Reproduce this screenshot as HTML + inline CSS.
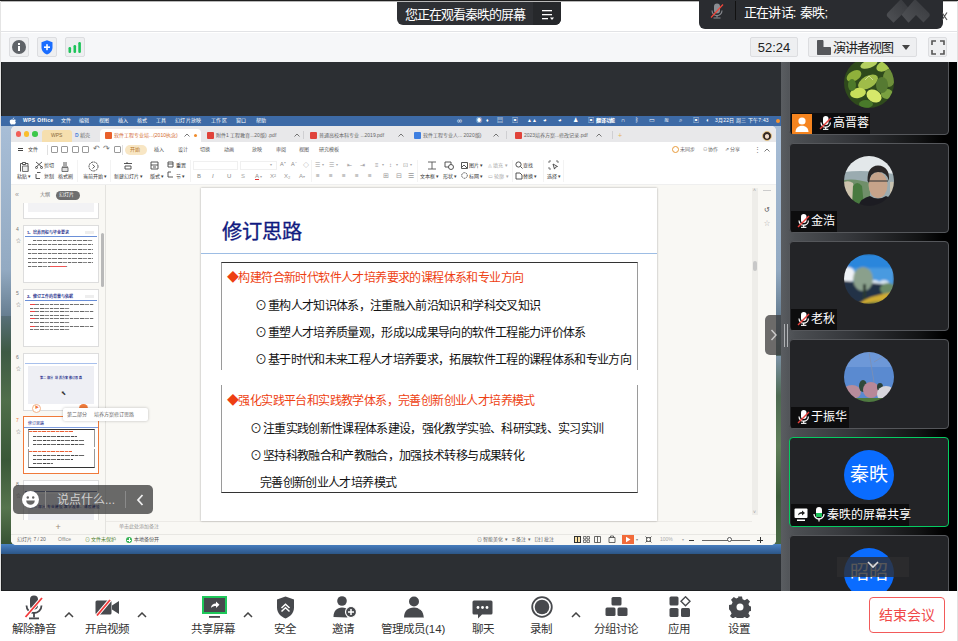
<!DOCTYPE html>
<html lang="zh-CN"><head><meta charset="utf-8">
<style>
*{margin:0;padding:0;box-sizing:border-box}
html,body{width:958px;height:641px;overflow:hidden;background:#fff;font-family:"Liberation Sans",sans-serif;position:relative}
.a{position:absolute}
#topline{left:0;top:0;width:958px;height:2px;background:linear-gradient(#1e1e1e 50%,#b8b8b8 50%)}
#hdr{left:0;top:2px;width:958px;height:30px;background:#fff;border-bottom:1px solid #e2e3e6}
#tb{left:0;top:33px;width:958px;height:29px;background:#f6f7f9}
.ib{top:37px;width:20px;height:20px;border:1px solid #dcdde0;background:#eeeff1;border-radius:2px}
#main{left:1px;top:62px;width:780px;height:529px;background:#2c2f33;border-left:1px solid #1e2022;border-bottom:1px solid #1e2022}
#lstrip{left:0;top:1px;width:1px;height:640px;background:#e4e4e4}
#rp{left:781px;top:62px;width:177px;height:529px;background:linear-gradient(90deg,#5a5d61 0%,#4c4f53 8%,#34363a 40%,#121314 78%,#000 92%)}
#bot{left:0;top:591px;width:958px;height:50px;background:#fff}
.card{left:789px;width:160px;height:90px;border:1px solid #5a5c60;border-radius:4px;background:#232427;overflow:hidden}
.lbl{position:absolute;left:1px;bottom:0;height:21px;background:#0d0d0e;color:#fff;font-size:12px;line-height:21px;white-space:nowrap}
.bt{position:absolute;top:595px;text-align:center;color:#333;font-size:12.5px}
.bt span{position:absolute;top:27px;white-space:nowrap}
.av{width:50px;height:50px;border-radius:50%}
#rpc{left:0;top:62px;width:958px;height:529px;overflow:hidden}
#rpc .card{margin-top:-62px}
.t{white-space:nowrap;line-height:1}
</style></head><body>
<div class="a" id="topline"></div>
<div class="a" id="hdr"></div>
<div class="a" id="tb"></div>
<div class="a ib" style="left:9px"><svg class="a" style="left:2px;top:2px" width="14" height="14" viewBox="0 0 14 14"><circle cx="7" cy="7" r="7" fill="#5f6368"/><rect x="6" y="6" width="2" height="5" fill="#fff"/><rect x="6" y="3" width="2" height="2" fill="#fff"/></svg></div>
<div class="a ib" style="left:37px"><svg class="a" style="left:3px;top:2px" width="12" height="15" viewBox="0 0 12 15"><path d="M6 0.3L11.5 2.3V7.5c0 3.4-2.5 5.8-5.5 7-3-1.2-5.5-3.6-5.5-7V2.3z" fill="#1a6dff"/><rect x="5.2" y="4.2" width="1.6" height="6" fill="#fff"/><rect x="3" y="6.4" width="6" height="1.6" fill="#fff"/></svg></div>
<div class="a ib" style="left:65px"><svg class="a" style="left:2px;top:4px" width="14" height="11" viewBox="0 0 14 11"><rect x="0.5" y="5" width="2.6" height="6" rx="1.2" fill="#1dc45a"/><rect x="5.5" y="3" width="2.6" height="8" rx="1.2" fill="#1dc45a"/><rect x="10.3" y="0" width="2.6" height="11" rx="1.2" fill="#1dc45a"/></svg></div>
<div class="a" style="left:750px;top:37px;width:48px;height:20px;border:1px solid #dcdde0;background:#eeeff1;border-radius:2px;color:#222;font-size:13px;line-height:20px;text-align:center">52:24</div>
<div class="a" style="left:808px;top:37px;width:109px;height:20px;border:1px solid #dcdde0;background:#eeeff1;border-radius:2px">
 <svg class="a" style="left:8px;top:2px" width="14" height="15" viewBox="0 0 14 15"><path d="M0.5 0.5h5.5v7h7.5v7h-13z" fill="#55575b" stroke="#55575b" stroke-linejoin="round"/></svg>
 <span class="a" style="left:24px;top:2px;color:#222;font-size:13px;letter-spacing:-1px;line-height:16px;white-space:nowrap">演讲者视图</span>
 <svg class="a" style="left:93px;top:7px" width="8" height="5" viewBox="0 0 8 5"><path d="M0 0h8l-4 5z" fill="#444"/></svg>
</div>
<div class="a" style="left:928px;top:37px;width:19px;height:20px;border:1px solid #dcdde0;background:#eeeff1;border-radius:2px">
 <svg class="a" style="left:2px;top:2px" width="14" height="15" viewBox="0 0 14 15"><path d="M1 5V1h4M9 1h4v4M13 10v4H9M5 14H1v-4" stroke="#555" stroke-width="1.6" fill="none"/></svg>
</div>

<div class="a" id="main"></div><div class="a" id="lstrip"></div><div class="a" style="left:0;top:640px;width:958px;height:1px;background:#e4e4e4"></div>
<div class="a" id="rp"></div>

<div class="a" id="ss" style="left:1px;top:116px;width:780px;height:438px;overflow:hidden;background:linear-gradient(180deg,#a9bfd8 0%,#93aac2 35%,#5d7486 48%,#3f5846 60%,#3c5a3c 80%,#2f4a2e 100%)">
 <div class="a" style="left:0;top:200px;width:12px;height:240px;background:linear-gradient(180deg,#586f78 0%,#3e5a44 15%,#4f6e4a 35%,#3a5838 60%,#56744e 80%,#2e482c 100%)"></div>
 <div class="a" style="left:773px;top:240px;width:8px;height:200px;background:linear-gradient(180deg,#7d93a6 0%,#4e6a52 20%,#5f7e58 45%,#3d5c3a 70%,#4b6a46 100%)"></div>
 <div class="a" style="left:0;top:428px;width:780px;height:10px;background:linear-gradient(180deg,#4b82c2 0%,#3a6aa6 50%,#2c5686 100%)"></div>
 <div class="a" id="menubar" style="left:0;top:0;width:780px;height:10px;background:#3d6aa6"><svg class="a" style="left:8px;top:0.5px" width="7" height="8" viewBox="0 0 7 8"><path d="M3.5 2.2C4 1 5 .5 5.3.5 5.3 1.3 4.5 2 3.5 2.2zM1 3.2c.8-1 2-.9 2.5-.6.5.2 1 .3 1.6-.1.7-.3 1.5 0 1.8.6-.8.5-.9 1.9 0 2.4-.3.9-.9 2-1.7 2-.5 0-.6-.3-1.3-.3s-.9.3-1.4.3C1.6 7.5.2 5 1 3.2z" fill="#fff"/></svg><span class="a t" style="left:22px;top:2px;font-size:5px;letter-spacing:0.35px;color:#fff;font-weight:normal"><b>WPS Office</b></span><span class="a t" style="left:60px;top:2px;font-size:5px;letter-spacing:0.35px;color:#fff;font-weight:normal">文件</span><span class="a t" style="left:78px;top:2px;font-size:5px;letter-spacing:0.35px;color:#fff;font-weight:normal">编辑</span><span class="a t" style="left:98px;top:2px;font-size:5px;letter-spacing:0.35px;color:#fff;font-weight:normal">视图</span><span class="a t" style="left:117px;top:2px;font-size:5px;letter-spacing:0.35px;color:#fff;font-weight:normal">插入</span><span class="a t" style="left:136px;top:2px;font-size:5px;letter-spacing:0.35px;color:#fff;font-weight:normal">格式</span><span class="a t" style="left:155px;top:2px;font-size:5px;letter-spacing:0.35px;color:#fff;font-weight:normal">工具</span><span class="a t" style="left:174px;top:2px;font-size:5px;letter-spacing:0.35px;color:#fff;font-weight:normal">幻灯片放映</span><span class="a t" style="left:210px;top:2px;font-size:5px;letter-spacing:0.35px;color:#fff;font-weight:normal">工作区</span><span class="a t" style="left:235px;top:2px;font-size:5px;letter-spacing:0.35px;color:#fff;font-weight:normal">窗口</span><span class="a t" style="left:255px;top:2px;font-size:5px;letter-spacing:0.35px;color:#fff;font-weight:normal">帮助</span><span class="a t" style="left:456px;top:0.8px;font-size:7px;color:#fff">∞</span><span class="a t" style="left:475px;top:1.4px;font-size:6px;color:#fff">◉</span><span class="a t" style="left:485px;top:2.0px;font-size:5px;color:#fff">♦</span><span class="a t" style="left:496px;top:1.4px;font-size:6px;color:#fff">▤</span><span class="a t" style="left:511px;top:1.4px;font-size:6px;color:#fff">▣</span><span class="a t" style="left:526px;top:2.0px;font-size:5px;color:#fff">▲▲</span><span class="a t" style="left:542px;top:1.4px;font-size:6px;color:#fff">◕</span><span class="a t" style="left:557px;top:1.4px;font-size:6px;color:#fff">◕</span><span class="a t" style="left:572px;top:1.4px;font-size:6px;color:#fff">♟</span><span class="a t" style="left:587px;top:1.4px;font-size:6px;color:#fff">▣</span><span class="a t" style="left:634px;top:1.4px;font-size:6px;color:#fff">ᛒ</span><span class="a t" style="left:648px;top:1.4px;font-size:6px;color:#fff">▭</span><span class="a t" style="left:663px;top:1.4px;font-size:6px;color:#fff">≋</span><span class="a t" style="left:678px;top:1.4px;font-size:6px;color:#fff">⌕</span><span class="a t" style="left:692px;top:1.4px;font-size:6px;color:#fff">▣</span><span class="a t" style="left:705px;top:1.4px;font-size:6px;color:#fff">◐</span><span class="a t" style="left:620px;top:1.4px;font-size:6px;color:#fff">∩</span><span class="a t" style="left:595px;top:2px;font-size:5px;color:#fff;font-weight:bold;letter-spacing:-0.2px">翻译功能</span><span class="a t" style="left:714px;top:2px;font-size:5px;color:#fff;letter-spacing:0.2px">3月22日 周三 下午7:43</span><div class="a" style="left:775px;top:3px;width:4px;height:4px;border-radius:50%;background:#f6922e"></div></div>
 <div class="a" id="wps" style="left:10px;top:10px;width:765px;height:419px;background:#fff;border-radius:5px;overflow:hidden"><!--WPS--><div class="a" style="left:0px;top:0px;width:765px;height:16px;background:#e8e8ea"></div><div class="a" style="left:4.7px;top:5.2px;width:5.6px;height:5.6px;border-radius:50%;background:#f25f58"></div><div class="a" style="left:12.7px;top:5.2px;width:5.6px;height:5.6px;border-radius:50%;background:#f9be2e"></div><div class="a" style="left:21.2px;top:5.2px;width:5.6px;height:5.6px;border-radius:50%;background:#3cc84a"></div><div class="a" style="left:31px;top:4px;width:30px;height:12px;background:#f6dfae;border-radius:3px 3px 0 0"></div><span class="a t" style="left:40px;top:7.0px;font-size:5px;color:#8a6a3a;font-weight:normal;">WPS</span><span class="a t" style="left:64px;top:7.0px;font-size:5px;color:#666;font-weight:normal;"><b style="color:#4a7fd8">D</b> 稻壳</span><div class="a" style="left:89px;top:3px;width:101px;height:13px;background:#fff;border-radius:4px 4px 0 0"></div><div class="a" style="left:94px;top:6px;width:7px;height:7px;background:#e9612c;border-radius:1px"></div><span class="a t" style="left:103px;top:7.0px;font-size:5px;color:#d2692e;font-weight:normal;">软件工程专业培...(2010执念)</span><svg class="a" style="left:173px;top:7px" width="6" height="4" viewBox="0 0 6 4"><path d="M.5 3.5L3 1l2.5 2.5" stroke="#555" stroke-width=".8" fill="none"/></svg><div class="a" style="left:183px;top:8px;width:3px;height:3px;background:#f08c2c;border-radius:50%"></div><div class="a" style="left:196px;top:6px;width:7px;height:7px;background:#e0433a;border-radius:1px"></div><span class="a t" style="left:205px;top:7.0px;font-size:5px;color:#666;font-weight:normal;">附件1 工程教育...20版) .pdf</span><div class="a" style="left:292px;top:5px;width:1px;height:8px;background:#cfcfd2"></div><div class="a" style="left:299px;top:6px;width:7px;height:7px;background:#e0433a;border-radius:1px"></div><span class="a t" style="left:308px;top:7.0px;font-size:5px;color:#666;font-weight:normal;">普通高校本科专业 ...2019.pdf</span><div class="a" style="left:403px;top:6px;width:7px;height:7px;background:#3f7fe0;border-radius:1px"></div><span class="a t" style="left:412px;top:7.0px;font-size:5px;color:#666;font-weight:normal;">软件工程专业人... 2020版)</span><svg class="a" style="left:482px;top:7px" width="6" height="4" viewBox="0 0 6 4"><path d="M.5 3.5L3 1l2.5 2.5" stroke="#555" stroke-width=".8" fill="none"/></svg><div class="a" style="left:495px;top:5px;width:1px;height:8px;background:#cfcfd2"></div><div class="a" style="left:504px;top:6px;width:7px;height:7px;background:#e0433a;border-radius:1px"></div><span class="a t" style="left:513px;top:7.0px;font-size:5px;color:#666;font-weight:normal;">2023培养方案...修改记录.pdf</span><div class="a" style="left:601px;top:5px;width:1px;height:8px;background:#cfcfd2"></div><svg class="a" style="left:283px;top:7px" width="6" height="4" viewBox="0 0 6 4"><path d="M.5 3.5L3 1l2.5 2.5" stroke="#555" stroke-width=".8" fill="none"/></svg><svg class="a" style="left:387px;top:7px" width="6" height="4" viewBox="0 0 6 4"><path d="M.5 3.5L3 1l2.5 2.5" stroke="#555" stroke-width=".8" fill="none"/></svg><svg class="a" style="left:585px;top:7px" width="6" height="4" viewBox="0 0 6 4"><path d="M.5 3.5L3 1l2.5 2.5" stroke="#555" stroke-width=".8" fill="none"/></svg><span class="a t" style="left:607px;top:5.8px;font-size:7px;color:#e6b455;font-weight:normal;">+</span><div class="a" style="left:751px;top:4.5px;width:10px;height:10px;border-radius:50%;border:1px solid #d9b77a;background:radial-gradient(ellipse at 50% 55%,#f4e6da 0%,#e8d2c0 30%,#2e2522 45%,#3a302c 70%,#f2ece4 85%)"></div><div class="a" style="left:0px;top:16px;width:765px;height:15px;background:#fff"></div><div class="a" style="left:7px;top:21.5px;width:5px;height:1px;background:#444"></div><div class="a" style="left:7px;top:24px;width:5px;height:1px;background:#444"></div><span class="a t" style="left:17px;top:21.0px;font-size:5px;color:#444;font-weight:normal;">文件</span><div class="a" style="left:36px;top:19px;width:1px;height:10px;background:#e0e0e0"></div><div class="a" style="left:40px;top:20px;width:7px;height:7px;border:0.8px solid #999;border-radius:1px;background:#fff"></div><div class="a" style="left:50px;top:20px;width:7px;height:7px;border:0.8px solid #999;border-radius:1px;background:#fff"></div><div class="a" style="left:61px;top:20px;width:7px;height:7px;border:0.8px solid #999;border-radius:1px;background:#fff"></div><div class="a" style="left:71px;top:20px;width:7px;height:7px;border:0.8px solid #999;border-radius:1px;background:#fff"></div><span class="a t" style="left:82px;top:19.2px;font-size:8px;color:#777;font-weight:normal;">↶</span><span class="a t" style="left:92px;top:19.2px;font-size:8px;color:#777;font-weight:normal;">↷</span><div class="a" style="left:103px;top:20px;width:7px;height:7px;border:0.8px solid #999;border-radius:1px;background:#fff"></div><div class="a" style="left:111px;top:19px;width:1px;height:10px;background:#e0e0e0"></div><div class="a" style="left:114px;top:19px;width:22px;height:10px;background:#f8e6c4;border-radius:5px"></div><span class="a t" style="left:119px;top:21.0px;font-size:5px;color:#b7782c;font-weight:normal;">开始</span><span class="a t" style="left:143px;top:21.0px;font-size:5px;color:#555;font-weight:normal;">插入</span><span class="a t" style="left:167px;top:21.0px;font-size:5px;color:#555;font-weight:normal;">设计</span><span class="a t" style="left:189px;top:21.0px;font-size:5px;color:#555;font-weight:normal;">切换</span><span class="a t" style="left:213px;top:21.0px;font-size:5px;color:#555;font-weight:normal;">动画</span><span class="a t" style="left:241px;top:21.0px;font-size:5px;color:#555;font-weight:normal;">放映</span><span class="a t" style="left:265px;top:21.0px;font-size:5px;color:#555;font-weight:normal;">审阅</span><span class="a t" style="left:288px;top:21.0px;font-size:5px;color:#555;font-weight:normal;">视图</span><span class="a t" style="left:308px;top:21.0px;font-size:5px;color:#555;font-weight:normal;">研究模板</span><div class="a" style="left:661px;top:20px;width:7px;height:7px;border:1px solid #e89a3a;border-radius:50%"></div><span class="a t" style="left:669px;top:21.0px;font-size:5px;color:#666;font-weight:normal;">未同步</span><span class="a t" style="left:692px;top:21.0px;font-size:5px;color:#666;font-weight:normal;">⚇ 协作</span><span class="a t" style="left:714px;top:21.0px;font-size:5px;color:#666;font-weight:normal;">⇗ 分享</span><span class="a t" style="left:743px;top:19.8px;font-size:7px;color:#777;font-weight:normal;">⋮</span><svg class="a" style="left:753px;top:22px" width="6" height="4" viewBox="0 0 6 4"><path d="M.5 3.5L3 1l2.5 2.5" stroke="#555" stroke-width=".8" fill="none"/></svg><div class="a" style="left:0px;top:31px;width:765px;height:28px;background:#fff"></div><div class="a" style="left:0px;top:58px;width:765px;height:1px;background:#efefef"></div><svg class="a" style="left:8px;top:35px" width="10" height="11" viewBox="0 0 10 11" fill="none" stroke="#444" stroke-width="0.9"><path d="M1.5 10.5V2.5h2M6.5 2.5h2.5v8"/><path d="M3.5 1.5h3v2h-3z"/><path d="M3.5 5h5.5v5.5H3.5z" fill="#eee" stroke="#666"/></svg><span class="a t" style="left:6px;top:48.0px;font-size:5px;color:#3a3a3a;font-weight:normal;">粘贴 ▾</span><svg class="a" style="left:24px;top:35px" width="8" height="8" viewBox="0 0 8 8" fill="none" stroke="#444" stroke-width="0.9"><path d="M1 1l6 5M7 1L1 6"/><circle cx="1.5" cy="6.5" r="1"/><circle cx="6.5" cy="6.5" r="1"/></svg><span class="a t" style="left:33px;top:36.5px;font-size:5px;color:#3a3a3a;font-weight:normal;">剪切</span><svg class="a" style="left:24px;top:45px" width="7" height="8" viewBox="0 0 7 8" fill="none" stroke="#444" stroke-width="0.9"><path d="M2 1.5h3.5M1 3v4.5h4"/></svg><span class="a t" style="left:33px;top:47.5px;font-size:5px;color:#3a3a3a;font-weight:normal;">复制</span><svg class="a" style="left:50px;top:35px" width="8" height="11" viewBox="0 0 8 11" fill="none" stroke="#444" stroke-width="0.9"><path d="M3 1v4M5 1v4M1 6h6" /><path d="M1 6.5h6v4H1z" fill="#ddd" stroke="#666"/></svg><span class="a t" style="left:47px;top:48.0px;font-size:5px;color:#3a3a3a;font-weight:normal;">格式刷</span><div class="a" style="left:66px;top:34px;width:1px;height:22px;background:#f3f3f3"></div><svg class="a" style="left:77px;top:35px" width="11" height="11" viewBox="0 0 11 11" fill="none" stroke="#444" stroke-width="0.9"><circle cx="5.5" cy="5.5" r="4.5" stroke-dasharray="2 0.6"/><path d="M4.5 3.5l2.2 2-2.2 2"/></svg><span class="a t" style="left:72px;top:48.0px;font-size:5px;color:#3a3a3a;font-weight:normal;">当前开始 ▾</span><div class="a" style="left:99px;top:34px;width:1px;height:22px;background:#f3f3f3"></div><svg class="a" style="left:112px;top:35px" width="10" height="10" viewBox="0 0 10 10" fill="none" stroke="#444" stroke-width="0.9"><path d="M1 2.5h8M2 5h6v3H2z M4 1v2"/></svg><span class="a t" style="left:103px;top:48.0px;font-size:5px;color:#3a3a3a;font-weight:normal;">新建幻灯片 ▾</span><svg class="a" style="left:139px;top:35px" width="9" height="9" viewBox="0 0 9 9" fill="none" stroke="#444" stroke-width="0.9"><path d="M1 1h7v7H1z M1 4h7 M3 6h3"/></svg><span class="a t" style="left:139px;top:48.0px;font-size:5px;color:#3a3a3a;font-weight:normal;">版式 ▾</span><svg class="a" style="left:156px;top:35px" width="7" height="7" viewBox="0 0 7 7" fill="none" stroke="#444" stroke-width="0.9"><path d="M1 1h5v5H1z M1 3h5"/></svg><span class="a t" style="left:165px;top:37.0px;font-size:5px;color:#3a3a3a;font-weight:normal;">重置</span><svg class="a" style="left:156px;top:45px" width="7" height="7" viewBox="0 0 7 7" fill="none" stroke="#444" stroke-width="0.9"><path d="M1 1h3M1 1v5h5"/></svg><span class="a t" style="left:165px;top:48.0px;font-size:5px;color:#3a3a3a;font-weight:normal;">节 ▾</span><div class="a" style="left:179px;top:34px;width:1px;height:22px;background:#f3f3f3"></div><div class="a" style="left:182px;top:35px;width:45px;height:9px;border:1px solid #f0f0f0"></div><div class="a" style="left:229px;top:35px;width:37px;height:9px;border:1px solid #f0f0f0"></div><span class="a t" style="left:259px;top:37.1px;font-size:4px;color:#aaa;font-weight:normal;">▾</span><span class="a t" style="left:269px;top:36.2px;font-size:5.5px;color:#888;font-weight:normal;">A⁺</span><span class="a t" style="left:280px;top:36.2px;font-size:5.5px;color:#888;font-weight:normal;">A⁻</span><span class="a t" style="left:292px;top:35.9px;font-size:6px;color:#888;font-weight:normal;">◇</span><span class="a t" style="left:186px;top:47.4px;font-size:6px;color:#888;font-weight:normal;">B</span><span class="a t" style="left:201px;top:47.4px;font-size:6px;color:#888;font-weight:normal;"><i>I</i></span><span class="a t" style="left:216px;top:47.4px;font-size:6px;color:#888;font-weight:normal;">U</span><span class="a t" style="left:230px;top:47.4px;font-size:6px;color:#aaa;font-weight:normal;">S</span><span class="a t" style="left:244px;top:47.4px;font-size:6px;color:#888;font-weight:normal;"><u style="text-decoration-color:#e03030">A</u></span><span class="a t" style="left:259px;top:47.4px;font-size:6px;color:#999;font-weight:normal;">X²</span><span class="a t" style="left:273px;top:47.4px;font-size:6px;color:#999;font-weight:normal;">X₂</span><span class="a t" style="left:288px;top:47.4px;font-size:6px;color:#999;font-weight:normal;">A</span><span class="a t" style="left:249px;top:48.6px;font-size:4px;color:#aaa;font-weight:normal;">▾</span><span class="a t" style="left:292px;top:48.6px;font-size:4px;color:#aaa;font-weight:normal;">▾</span><div class="a" style="left:300px;top:34px;width:1px;height:22px;background:#f3f3f3"></div><span class="a t" style="left:304px;top:35.9px;font-size:6px;color:#999;font-weight:normal;">☰</span><span class="a t" style="left:318px;top:35.9px;font-size:6px;color:#999;font-weight:normal;">☰</span><span class="a t" style="left:336px;top:35.9px;font-size:6px;color:#999;font-weight:normal;">⇤</span><span class="a t" style="left:349px;top:35.9px;font-size:6px;color:#999;font-weight:normal;">⇥</span><span class="a t" style="left:364px;top:35.9px;font-size:6px;color:#999;font-weight:normal;">≡</span><span class="a t" style="left:378px;top:35.9px;font-size:6px;color:#999;font-weight:normal;">↕</span><span class="a t" style="left:392px;top:35.9px;font-size:6px;color:#999;font-weight:normal;">⊡</span><span class="a t" style="left:311px;top:37.1px;font-size:4px;color:#aaa;font-weight:normal;">▾</span><span class="a t" style="left:325px;top:37.1px;font-size:4px;color:#aaa;font-weight:normal;">▾</span><span class="a t" style="left:371px;top:37.1px;font-size:4px;color:#aaa;font-weight:normal;">▾</span><span class="a t" style="left:385px;top:37.1px;font-size:4px;color:#aaa;font-weight:normal;">▾</span><span class="a t" style="left:399px;top:37.1px;font-size:4px;color:#aaa;font-weight:normal;">▾</span><span class="a t" style="left:305px;top:47.1px;font-size:6.5px;color:#999;font-weight:normal;">≡</span><span class="a t" style="left:318px;top:47.1px;font-size:6.5px;color:#999;font-weight:normal;">≡</span><span class="a t" style="left:331px;top:47.1px;font-size:6.5px;color:#999;font-weight:normal;">≡</span><span class="a t" style="left:344px;top:47.1px;font-size:6.5px;color:#999;font-weight:normal;">≡</span><span class="a t" style="left:357px;top:47.1px;font-size:6.5px;color:#999;font-weight:normal;">≡</span><span class="a t" style="left:372px;top:47.1px;font-size:6.5px;color:#999;font-weight:normal;">⊞</span><span class="a t" style="left:385px;top:47.1px;font-size:6.5px;color:#999;font-weight:normal;">⊟</span><span class="a t" style="left:397px;top:47.1px;font-size:6.5px;color:#999;font-weight:normal;">☰</span><div class="a" style="left:406px;top:34px;width:1px;height:22px;background:#f3f3f3"></div><svg class="a" style="left:416px;top:35px" width="10" height="9" viewBox="0 0 10 9" fill="none" stroke="#444" stroke-width="0.9"><path d="M1 1h8M5 1v7M1 8h8" stroke="#555"/></svg><span class="a t" style="left:409px;top:48.0px;font-size:5px;color:#3a3a3a;font-weight:normal;">文本框 ▾</span><svg class="a" style="left:433px;top:35px" width="10" height="9" viewBox="0 0 10 9" fill="none" stroke="#444" stroke-width="0.9"><path d="M1 1h6v5H1z"/><circle cx="7" cy="6" r="2.5" fill="#fff"/></svg><span class="a t" style="left:432px;top:48.0px;font-size:5px;color:#3a3a3a;font-weight:normal;">形状 ▾</span><svg class="a" style="left:450px;top:36px" width="7" height="7" viewBox="0 0 7 7" fill="none" stroke="#444" stroke-width="0.9"><path d="M.5 .5h6v6h-6z M1 5l2-2 3 3"/></svg><span class="a t" style="left:458px;top:37.0px;font-size:5px;color:#3a3a3a;font-weight:normal;">图片 ▾</span><svg class="a" style="left:450px;top:46px" width="7" height="7" viewBox="0 0 7 7" fill="none" stroke="#444" stroke-width="0.9"><circle cx="3.5" cy="3.5" r="2.8" stroke-dasharray="1.2 .6"/></svg><span class="a t" style="left:458px;top:48.0px;font-size:5px;color:#3a3a3a;font-weight:normal;">标网 ▾</span><span class="a t" style="left:477px;top:37.0px;font-size:5px;color:#aaa;font-weight:normal;">◬ 填充 ▾</span><span class="a t" style="left:477px;top:48.0px;font-size:5px;color:#aaa;font-weight:normal;">▭ 轮廓 ▾</span><div class="a" style="left:501px;top:34px;width:1px;height:22px;background:#f3f3f3"></div><svg class="a" style="left:504px;top:35px" width="8" height="8" viewBox="0 0 8 8" fill="none" stroke="#444" stroke-width="0.9"><circle cx="3.5" cy="3.5" r="2.6"/><path d="M5.5 5.5l2 2"/></svg><span class="a t" style="left:512px;top:37.0px;font-size:5px;color:#3a3a3a;font-weight:normal;">查找</span><svg class="a" style="left:504px;top:46px" width="8" height="8" viewBox="0 0 8 8" fill="none" stroke="#444" stroke-width="0.9"><path d="M1 7V1h4l2 2v4z"/></svg><span class="a t" style="left:512px;top:48.0px;font-size:5px;color:#3a3a3a;font-weight:normal;">替换 ▾</span><div class="a" style="left:532px;top:34px;width:1px;height:22px;background:#f3f3f3"></div><svg class="a" style="left:537px;top:34px" width="11" height="11" viewBox="0 0 11 11" fill="none" stroke="#444" stroke-width="0.9"><path d="M1 3V1h2M8 1h2v2M1 7v2h2" stroke="#666"/><path d="M5 4l4.5 2.5-2 .6-1 2z" fill="#fff" stroke="#444"/></svg><span class="a t" style="left:536px;top:48.0px;font-size:5px;color:#3a3a3a;font-weight:normal;">选择 ▾</span><div class="a" style="left:552px;top:34px;width:1px;height:22px;background:#f3f3f3"></div><div class="a" style="left:0px;top:59px;width:765px;height:349px;background:#f9f8f4"></div><div class="a" style="left:94px;top:59px;width:1px;height:349px;background:#e4e3df"></div><span class="a t" style="left:4px;top:64.8px;font-size:7px;color:#999;font-weight:normal;">«</span><span class="a t" style="left:29px;top:66.0px;font-size:5px;color:#777;font-weight:normal;">大纲</span><div class="a" style="left:45px;top:65px;width:24px;height:9px;background:#6e6e6e;border-radius:5px"></div><span class="a t" style="left:48px;top:66.0px;font-size:5px;color:#fff;font-weight:normal;">幻灯片</span><div class="a" style="left:0;top:77px;width:94px;height:317px;overflow:hidden"><div class="a" style="left:12px;top:-42px;width:76px;height:58px;background:#fff;border:1px solid #ddd"></div><span class="a t" style="left:5px;top:-40.0px;font-size:5px;color:#777;">3</span><span class="a t" style="left:5px;top:-29.0px;font-size:5px;color:#888;">☆</span><div class="a" style="left:12px;top:22px;width:76px;height:58px;background:#fff;border:1px solid #ddd"></div><span class="a t" style="left:5px;top:24.0px;font-size:5px;color:#777;">4</span><span class="a t" style="left:5px;top:35.0px;font-size:5px;color:#888;">☆</span><div class="a" style="left:12px;top:86px;width:76px;height:58px;background:#fff;border:1px solid #ddd"></div><span class="a t" style="left:5px;top:88.0px;font-size:5px;color:#777;">5</span><span class="a t" style="left:5px;top:99.0px;font-size:5px;color:#888;">☆</span><div class="a" style="left:12px;top:150px;width:76px;height:58px;background:#fff;border:1px solid #ddd"></div><span class="a t" style="left:5px;top:152.0px;font-size:5px;color:#777;">6</span><span class="a t" style="left:5px;top:163.0px;font-size:5px;color:#888;">☆</span><div class="a" style="left:12px;top:213px;width:76px;height:58px;background:#fff;border:1.5px solid #f07a3a"></div><span class="a t" style="left:5px;top:215.0px;font-size:5px;color:#f07a3a;">7</span><span class="a t" style="left:5px;top:226.0px;font-size:5px;color:#888;">☆</span><div class="a" style="left:12px;top:277px;width:76px;height:58px;background:#fff;border:1px solid #ddd"></div><span class="a t" style="left:5px;top:279.0px;font-size:5px;color:#777;">8</span><span class="a t" style="left:5px;top:290.0px;font-size:5px;color:#888;">☆</span><div class="a" style="left:17px;top:-13px;width:66px;height:22px;background:#f2f2f4"></div><span class="a t" style="left:16px;top:27.6px;font-size:4px;color:#555;"><span style="color:#1b2a8a;font-weight:bold">1、培养目标与毕业要求</span></span><div class="a" style="left:74px;top:28px;width:9px;height:3px;background:#eee"></div><div class="a" style="left:14px;top:33px;width:72px;height:1px;background:#6a8fd8"></div><div class="a" style="left:22px;top:37px;width:60px;height:1px;background:repeating-linear-gradient(90deg,#6a6a6a 0 3px,#d8d8d8 3px 4px,#7a7a7a 4px 9px,#f4f4f4 9px 10px,#666 10px 14px,#c8c8c8 14px 15px,#888 15px 19px,#eee 19px 20px)"></div><div class="a" style="left:17px;top:41px;width:65px;height:1px;background:repeating-linear-gradient(90deg,#6a6a6a 0 3px,#d8d8d8 3px 4px,#7a7a7a 4px 9px,#f4f4f4 9px 10px,#666 10px 14px,#c8c8c8 14px 15px,#888 15px 19px,#eee 19px 20px)"></div><div class="a" style="left:17px;top:46px;width:65px;height:1px;background:repeating-linear-gradient(90deg,#6a6a6a 0 3px,#d8d8d8 3px 4px,#7a7a7a 4px 9px,#f4f4f4 9px 10px,#666 10px 14px,#c8c8c8 14px 15px,#888 15px 19px,#eee 19px 20px)"></div><div class="a" style="left:17px;top:50px;width:65px;height:1px;background:repeating-linear-gradient(90deg,#6a6a6a 0 3px,#d8d8d8 3px 4px,#7a7a7a 4px 9px,#f4f4f4 9px 10px,#666 10px 14px,#c8c8c8 14px 15px,#888 15px 19px,#eee 19px 20px)"></div><div class="a" style="left:17px;top:55px;width:65px;height:1px;background:repeating-linear-gradient(90deg,#6a6a6a 0 3px,#d8d8d8 3px 4px,#7a7a7a 4px 9px,#f4f4f4 9px 10px,#666 10px 14px,#c8c8c8 14px 15px,#888 15px 19px,#eee 19px 20px)"></div><div class="a" style="left:17px;top:59px;width:65px;height:1px;background:repeating-linear-gradient(90deg,#6a6a6a 0 3px,#d8d8d8 3px 4px,#7a7a7a 4px 9px,#f4f4f4 9px 10px,#666 10px 14px,#c8c8c8 14px 15px,#888 15px 19px,#eee 19px 20px)"></div><div class="a" style="left:17px;top:63px;width:40px;height:1px;background:repeating-linear-gradient(90deg,#6a6a6a 0 3px,#d8d8d8 3px 4px,#7a7a7a 4px 9px,#f4f4f4 9px 10px,#666 10px 14px,#c8c8c8 14px 15px,#888 15px 19px,#eee 19px 20px)"></div><div class="a" style="left:39px;top:63px;width:16px;height:1px;background:#e55"></div><span class="a t" style="left:16px;top:91.6px;font-size:4px;color:#555;"><span style="color:#1b2a8a;font-weight:bold">2、修订工作的背景与依据</span></span><div class="a" style="left:74px;top:92px;width:9px;height:3px;background:#eee"></div><div class="a" style="left:14px;top:97px;width:72px;height:1px;background:#6a8fd8"></div><div class="a" style="left:19px;top:101px;width:64px;height:1px;background:repeating-linear-gradient(90deg,#6a6a6a 0 3px,#d8d8d8 3px 4px,#7a7a7a 4px 9px,#f4f4f4 9px 10px,#666 10px 14px,#c8c8c8 14px 15px,#888 15px 19px,#eee 19px 20px)"></div><div class="a" style="left:19px;top:101px;width:5px;height:1px;background:#e44"></div><div class="a" style="left:19px;top:105px;width:40px;height:1px;background:repeating-linear-gradient(90deg,#6a6a6a 0 3px,#d8d8d8 3px 4px,#7a7a7a 4px 9px,#f4f4f4 9px 10px,#666 10px 14px,#c8c8c8 14px 15px,#888 15px 19px,#eee 19px 20px)"></div><div class="a" style="left:19px;top:108px;width:64px;height:1px;background:repeating-linear-gradient(90deg,#6a6a6a 0 3px,#d8d8d8 3px 4px,#7a7a7a 4px 9px,#f4f4f4 9px 10px,#666 10px 14px,#c8c8c8 14px 15px,#888 15px 19px,#eee 19px 20px)"></div><div class="a" style="left:19px;top:108px;width:5px;height:1px;background:#e44"></div><div class="a" style="left:19px;top:112px;width:40px;height:1px;background:repeating-linear-gradient(90deg,#6a6a6a 0 3px,#d8d8d8 3px 4px,#7a7a7a 4px 9px,#f4f4f4 9px 10px,#666 10px 14px,#c8c8c8 14px 15px,#888 15px 19px,#eee 19px 20px)"></div><div class="a" style="left:19px;top:115px;width:64px;height:1px;background:repeating-linear-gradient(90deg,#6a6a6a 0 3px,#d8d8d8 3px 4px,#7a7a7a 4px 9px,#f4f4f4 9px 10px,#666 10px 14px,#c8c8c8 14px 15px,#888 15px 19px,#eee 19px 20px)"></div><div class="a" style="left:19px;top:115px;width:5px;height:1px;background:#e44"></div><div class="a" style="left:19px;top:119px;width:40px;height:1px;background:repeating-linear-gradient(90deg,#6a6a6a 0 3px,#d8d8d8 3px 4px,#7a7a7a 4px 9px,#f4f4f4 9px 10px,#666 10px 14px,#c8c8c8 14px 15px,#888 15px 19px,#eee 19px 20px)"></div><div class="a" style="left:19px;top:123px;width:64px;height:1px;background:repeating-linear-gradient(90deg,#6a6a6a 0 3px,#d8d8d8 3px 4px,#7a7a7a 4px 9px,#f4f4f4 9px 10px,#666 10px 14px,#c8c8c8 14px 15px,#888 15px 19px,#eee 19px 20px)"></div><div class="a" style="left:19px;top:123px;width:5px;height:1px;background:#e44"></div><div class="a" style="left:19px;top:126px;width:40px;height:1px;background:repeating-linear-gradient(90deg,#6a6a6a 0 3px,#d8d8d8 3px 4px,#7a7a7a 4px 9px,#f4f4f4 9px 10px,#666 10px 14px,#c8c8c8 14px 15px,#888 15px 19px,#eee 19px 20px)"></div><div class="a" style="left:14px;top:160px;width:72px;height:1px;background:#a8c0ec"></div><div class="a" style="left:17px;top:163px;width:66px;height:38px;background:#eeeff4"></div><span class="a t" style="left:29px;top:173.7px;font-size:3px;color:#555;"><span style="color:#1b2a8a;font-weight:bold;letter-spacing:.3px">第二部分&nbsp;&nbsp;培养方案修订思路</span></span><span class="a t" style="left:50px;top:187.4px;font-size:6px;color:#333;">⬉</span><div class="a" style="left:21px;top:201px;width:9px;height:9px;border-radius:50%;background:#fff;border:1px solid #f2b48a"></div><span class="a t" style="left:23.5px;top:203.1px;font-size:4px;color:#f0743a;">▶</span><div class="a" style="left:68px;top:201px;width:9px;height:9px;border-radius:50%;background:#f07a3a"></div><span class="a t" style="left:17px;top:218.6px;font-size:4px;color:#555;"><span style="color:#1b2a8a">修订思路</span></span><div class="a" style="left:13px;top:224px;width:74px;height:1px;background:#7f9ee0"></div><div class="a" style="left:17px;top:226px;width:67px;height:18px;border:1px solid #999;border-top-color:#333;border-bottom:none"></div><div class="a" style="left:17px;top:246px;width:67px;height:19px;border:1px solid #999;border-bottom-color:#333;border-top:none"></div><div class="a" style="left:18px;top:228px;width:44px;height:1px;background:repeating-linear-gradient(90deg,#ee6a40 0 3px,#f8c0a8 3px 4px,#e85a30 4px 8px,#fbd8c8 8px 9px)"></div><div class="a" style="left:22px;top:233px;width:44px;height:1px;background:repeating-linear-gradient(90deg,#555 0 3px,#ccc 3px 4px,#666 4px 9px,#eee 9px 10px,#444 10px 13px,#bbb 13px 14px)"></div><div class="a" style="left:22px;top:237px;width:51px;height:1px;background:repeating-linear-gradient(90deg,#555 0 3px,#ccc 3px 4px,#666 4px 9px,#eee 9px 10px,#444 10px 13px,#bbb 13px 14px)"></div><div class="a" style="left:22px;top:241px;width:52px;height:1px;background:repeating-linear-gradient(90deg,#555 0 3px,#ccc 3px 4px,#666 4px 9px,#eee 9px 10px,#444 10px 13px,#bbb 13px 14px)"></div><div class="a" style="left:18px;top:248px;width:43px;height:1px;background:repeating-linear-gradient(90deg,#ee6a40 0 3px,#f8c0a8 3px 4px,#e85a30 4px 8px,#fbd8c8 8px 9px)"></div><div class="a" style="left:22px;top:252px;width:52px;height:1px;background:repeating-linear-gradient(90deg,#555 0 3px,#ccc 3px 4px,#666 4px 9px,#eee 9px 10px,#444 10px 13px,#bbb 13px 14px)"></div><div class="a" style="left:22px;top:256px;width:40px;height:1px;background:repeating-linear-gradient(90deg,#555 0 3px,#ccc 3px 4px,#666 4px 9px,#eee 9px 10px,#444 10px 13px,#bbb 13px 14px)"></div><div class="a" style="left:22px;top:260px;width:20px;height:1px;background:repeating-linear-gradient(90deg,#555 0 3px,#ccc 3px 4px,#666 4px 9px,#eee 9px 10px,#444 10px 13px,#bbb 13px 14px)"></div><div class="a" style="left:14px;top:288px;width:72px;height:0.8px;background:#5a6a9a"></div><div class="a" style="left:17px;top:291px;width:66px;height:40px;background:#eeeff4"></div><span class="a t" style="left:19px;top:302.8px;font-size:3.6px;color:#555;"><span style="color:#1b2a8a;font-weight:bold">第三部分&nbsp;专业建设&nbsp;教学改革、课程建设</span></span><div class="a" style="left:90px;top:30px;width:3px;height:54px;background:#b9b9b9;border-radius:2px"></div></div><span class="a t" style="left:44.5px;top:396.6px;font-size:9px;color:#9a8a78;font-weight:normal;">+</span><div class="a" style="left:52px;top:282px;width:85px;height:13px;background:#fff;box-shadow:0 0 3px rgba(0,0,0,.25);border-radius:2px"></div><span class="a t" style="left:56px;top:285.5px;font-size:5px;color:#666;font-weight:normal;">第二部分&nbsp;&nbsp;&nbsp;&nbsp;&nbsp;培养方案修订思路</span><div class="a" style="left:741px;top:62px;width:6px;height:327px;background:#eeede9"></div><div class="a" style="left:741.5px;top:135px;width:4px;height:10px;background:#c8c8c8;border-radius:2px"></div><span class="a t" style="left:742px;top:62.0px;font-size:5px;color:#999;font-weight:normal;">˄</span><span class="a t" style="left:742px;top:384.0px;font-size:5px;color:#999;font-weight:normal;">˅</span><div class="a" style="left:752px;top:64px;width:8px;height:1px;background:#ccc"></div><span class="a t" style="left:753px;top:79.8px;font-size:7px;color:#444;font-weight:normal;">↺</span><span class="a t" style="left:753px;top:94.4px;font-size:6px;color:#aaa;font-weight:normal;">☆</span><div class="a" style="left:95px;top:395px;width:646px;height:13px;background:#f9f8f4;border-top:1px solid #eceae6"></div><span class="a t" style="left:108px;top:397.5px;font-size:5px;color:#999;font-weight:normal;">单击此处添加备注</span><div class="a" style="left:0px;top:408px;width:765px;height:11px;background:#f9f8f4;border-top:1px solid #e8e7e3"></div><span class="a t" style="left:6px;top:411.0px;font-size:5px;color:#666;font-weight:normal;">幻灯片 7 / 20</span><span class="a t" style="left:47px;top:411.0px;font-size:5px;color:#888;font-weight:normal;">Office</span><span class="a t" style="left:74px;top:411.0px;font-size:5px;color:#4f7f2f;font-weight:normal;">⊙ 文件未保护</span><div class="a" style="left:115px;top:411px;width:6px;height:6px;background:#3cb45a;border-radius:50%"></div><div class="a" style="left:117.5px;top:412.20000000000005px;width:1px;height:3.6px;background:#fff"></div><div class="a" style="left:116.2px;top:413.5px;width:3.6px;height:1px;background:#fff"></div><span class="a t" style="left:123px;top:411.0px;font-size:5px;color:#555;font-weight:normal;">本地备份开</span><span class="a t" style="left:466px;top:411.0px;font-size:5px;color:#666;font-weight:normal;">⊙ 智能美化 ▾&nbsp;&nbsp;&nbsp;≡ 备注 ▾&nbsp;&nbsp;&nbsp;[注] 批注</span><div class="a" style="left:563px;top:410px;width:7px;height:7px;background:#fbe3a8;border:1px solid #333"></div><div class="a" style="left:566px;top:410px;width:1px;height:7px;background:#333"></div><svg class="a" style="left:572px;top:410px" width="7" height="7" viewBox="0 0 7 7" fill="none" stroke="#444" stroke-width="0.9"><path d="M.5 .5h2.5v2.5H.5zM4 .5h2.5v2.5H4zM.5 4h2.5v2.5H.5zM4 4h2.5v2.5H4z" stroke="#444" stroke-width=".7"/></svg><svg class="a" style="left:583px;top:410px" width="7" height="7" viewBox="0 0 7 7" fill="none" stroke="#444" stroke-width="0.9"><path d="M.5 .5h6v6h-6zM3.5 .5v6" stroke="#444" stroke-width=".8"/></svg><svg class="a" style="left:597px;top:409px" width="8" height="8" viewBox="0 0 8 8" fill="none" stroke="#444" stroke-width="0.9"><path d="M1 2.5h6v5H1zM2.5 2.5V1h3v1.5" stroke="#444" stroke-width=".8"/></svg><div class="a" style="left:611px;top:409px;width:12px;height:9px;background:#f26b3a"></div><svg class="a" style="left:614px;top:410px" width="6" height="7" viewBox="0 0 6 7" fill="none" stroke="#444" stroke-width="0.9"><path d="M1 .8l4.5 2.7L1 6.2z" fill="#fff" stroke="none"/></svg><span class="a t" style="left:625px;top:411.6px;font-size:4px;color:#888;font-weight:normal;">▾</span><svg class="a" style="left:634px;top:410px" width="7" height="7" viewBox="0 0 7 7" fill="none" stroke="#444" stroke-width="0.9"><path d="M.5 .5l2 2M6.5 .5l-2 2M.5 6.5l2-2M6.5 6.5l-2-2M1.5 1.5h4v4h-4z" stroke="#444" stroke-width=".8"/></svg><span class="a t" style="left:649px;top:411.0px;font-size:5px;color:#aaa;font-weight:normal;">100%</span><span class="a t" style="left:671px;top:411.6px;font-size:4px;color:#aaa;font-weight:normal;">▾</span><div class="a" style="left:678px;top:413.5px;width:5px;height:1px;background:#333"></div><div class="a" style="left:691px;top:413.5px;width:48px;height:1px;background:#666"></div><div class="a" style="left:716px;top:411px;width:5px;height:5px;background:#fff;border:1px solid #555;border-radius:50%"></div><div class="a" style="left:746px;top:413.5px;width:6px;height:1px;background:#333"></div><div class="a" style="left:748.5px;top:411px;width:1px;height:6px;background:#333"></div><div class="a" style="left:190px;top:62px;width:456px;height:333px;background:#fff;box-shadow:0 0 2px rgba(0,0,0,.35);overflow:hidden"><span class="a t" style="left:21px;top:33.5px;font-size:20.2px;color:#101a80;font-weight:500;-webkit-text-stroke:0.35px #101a80">修订思路</span><div class="a" style="left:0;top:65px;width:456px;height:1px;background:#9dbde4"></div><div class="a" style="left:20px;top:74px;width:417px;height:108px;border:1px solid #9a9a9a;border-top-color:#333;border-bottom:none"></div><div class="a" style="left:20px;top:197px;width:417px;height:108px;border:1px solid #9a9a9a;border-bottom-color:#333;border-top:none"></div><span class="a t" style="left:26px;top:83.5px;font-size:12px;color:#ee3f12;font-weight:500;letter-spacing:-0.6px">◆构建符合新时代软件人才培养要求的课程体系和专业方向</span><span class="a t" style="left:54px;top:111.5px;font-size:12px;color:#111;font-weight:500;letter-spacing:-0.65px"><span style="margin-right:1.5px">⊙</span>重构人才知识体系，注重融入前沿知识和学科交叉知识</span><span class="a t" style="left:54px;top:138.5px;font-size:12px;color:#111;font-weight:500;letter-spacing:-0.65px"><span style="margin-right:1.5px">⊙</span>重塑人才培养质量观，形成以成果导向的软件工程能力评价体系</span><span class="a t" style="left:54px;top:165.5px;font-size:12px;color:#111;font-weight:500;letter-spacing:-0.65px"><span style="margin-right:1.5px">⊙</span>基于时代和未来工程人才培养要求，拓展软件工程的课程体系和专业方向</span><span class="a t" style="left:26px;top:206.5px;font-size:12px;color:#ee3f12;font-weight:500;letter-spacing:-0.6px">◆强化实践平台和实践教学体系，完善创新创业人才培养模式</span><span class="a t" style="left:49px;top:234.5px;font-size:12px;color:#111;font-weight:500;letter-spacing:-0.65px"><span style="margin-right:1.5px">⊙</span>注重实践创新性课程体系建设，强化教学实验、科研实践、实习实训</span><span class="a t" style="left:49px;top:261.5px;font-size:12px;color:#111;font-weight:500;letter-spacing:-0.65px"><span style="margin-right:1.5px">⊙</span>坚持科教融合和产教融合，加强技术转移与成果转化</span><span class="a t" style="left:59px;top:288.5px;font-size:12px;color:#111;font-weight:500;letter-spacing:-0.65px">完善创新创业人才培养模式</span></div><!--/WPS--></div>
</div>
<div class="a" id="rpc"><div class="a card" style="top:45px;border-color:#55575b"><svg class="a" style="left:54px;top:12px" width="50" height="50" viewBox="0 0 50 50"><defs><clipPath id="cp1"><circle cx="25" cy="25" r="25"/></clipPath><filter id="bl1"><feGaussianBlur stdDeviation="0.6"/></filter></defs><g clip-path="url(#cp1)"><rect width="50" height="50" fill="#2f4a1c"/><g filter="url(#bl1)">
<ellipse cx="10" cy="18" rx="8" ry="5" transform="rotate(-30 10 18)" fill="#8fb03a"/>
<ellipse cx="25" cy="6" rx="9" ry="4" transform="rotate(-20 25 6)" fill="#b5d060"/>
<ellipse cx="40" cy="8" rx="8" ry="5" transform="rotate(-25 40 8)" fill="#a9c850"/>
<ellipse cx="45" cy="20" rx="6" ry="9" fill="#6e8f3a"/>
<ellipse cx="24" cy="24" rx="11" ry="6" transform="rotate(-30 24 24)" fill="#9fbc4a"/>
<ellipse cx="14" cy="35" rx="8" ry="5" transform="rotate(-10 14 35)" fill="#c8de5a"/>
<ellipse cx="30" cy="38" rx="8" ry="6" transform="rotate(30 30 38)" fill="#d6e86a"/>
<ellipse cx="43" cy="36" rx="6" ry="5" fill="#7aa040"/>
<ellipse cx="8" cy="27" rx="4" ry="6" fill="#4e7a2a"/>
<ellipse cx="22" cy="46" rx="7" ry="4" fill="#4a7a2a"/>
<ellipse cx="38" cy="27" rx="6" ry="8" fill="#577a30"/>
</g><path d="M21 22l4-4 4 4" stroke="#e8f0c0" stroke-width="0.8" fill="none" opacity=".8"/></g></svg><div class="lbl" style="width:79px"><div class="a" style="left:1px;top:1px;width:20px;height:20px;background:#f5841f"><svg width="20" height="20" viewBox="0 0 20 20"><circle cx="10" cy="7" r="3.6" fill="#fff"/><path d="M3.5 18c0-4 2.8-6.3 6.5-6.3s6.5 2.3 6.5 6.3z" fill="#fff"/></svg></div><svg class="a" style="left:28px;top:3px" width="13" height="14" viewBox="0 0 13 14"><rect x="4" y="0" width="5.5" height="9" rx="2.75" fill="#fff"/><path d="M2 6.5a4.7 4.7 0 0 0 9.4 0" stroke="#fff" stroke-width="1.2" fill="none"/><rect x="6.1" y="11" width="1.2" height="2.2" fill="#fff"/><rect x="4" y="12.8" width="5.4" height="1.1" fill="#fff"/><path d="M1 13L12 2" stroke="#e8413c" stroke-width="1.5"/></svg><span class="a" style="left:42px;top:0">高晋蓉</span></div></div><div class="a card" style="top:143px;border-color:#55575b"><svg class="a" style="left:54px;top:12px" width="50" height="50" viewBox="0 0 50 50"><defs><clipPath id="cp2"><circle cx="25" cy="25" r="25"/></clipPath><filter id="bl2"><feGaussianBlur stdDeviation="0.6"/></filter></defs><g clip-path="url(#cp2)" filter="url(#bl2)"><rect width="50" height="50" fill="#e3e8ea"/>
<path d="M0 16 Q20 13 50 18 L50 50 L0 50z" fill="#9aabb0"/>
<path d="M0 24 Q12 22 26 27 L26 50 L0 50z" fill="#6f8f6a"/>
<path d="M0 26 Q5 24 9 27 L14 50 L0 50z" fill="#cdc3ad"/>
<path d="M9 30 Q13 24 18 30 L20 50 L8 50z" fill="#4a7a40"/>
<path d="M46 26 Q49 25 51 27 L51 42 L46 40z" fill="#c8c2b0"/>
<ellipse cx="34" cy="29" rx="9.5" ry="13" fill="#c6a38a"/>
<path d="M23.5 25 Q23 10 34 9.5 Q46 10 45 25 Q43 16 34 16 Q26 16 25 27z" fill="#2b2826"/>
<path d="M25 25h19" stroke="#3a3a3a" stroke-width="1.1"/>
<path d="M14 50 Q17 42 26 40 Q34 45 42 40 Q49 42 52 50z" fill="#1d1f21"/>
</g></svg><div class="lbl" style="width:46px"><svg class="a" style="left:6px;top:3px" width="13" height="14" viewBox="0 0 13 14"><rect x="4" y="0" width="5.5" height="9" rx="2.75" fill="#fff"/><path d="M2 6.5a4.7 4.7 0 0 0 9.4 0" stroke="#fff" stroke-width="1.2" fill="none"/><rect x="6.1" y="11" width="1.2" height="2.2" fill="#fff"/><rect x="4" y="12.8" width="5.4" height="1.1" fill="#fff"/><path d="M1 13L12 2" stroke="#e8413c" stroke-width="1.5"/></svg><span class="a" style="left:20px;top:0">金浩</span></div></div><div class="a card" style="top:241px;border-color:#55575b"><svg class="a" style="left:54px;top:12px" width="50" height="50" viewBox="0 0 50 50"><defs><clipPath id="cp3"><circle cx="25" cy="25" r="25"/></clipPath><filter id="bl3"><feGaussianBlur stdDeviation="0.8"/></filter></defs><g clip-path="url(#cp3)" filter="url(#bl3)"><rect width="50" height="50" fill="#4a9ae0"/>
<rect y="0" width="50" height="14" fill="#2c86dc"/>
<ellipse cx="4" cy="21" rx="7" ry="8" fill="#eef2f6"/>
<ellipse cx="30" cy="29" rx="6" ry="3" fill="#dbe7f2"/>
<ellipse cx="40" cy="29" rx="5" ry="3" fill="#d5e3ef"/>
<path d="M0 27 L50 31 L50 50 L0 50z" fill="#243246"/>
<ellipse cx="19" cy="25" rx="10" ry="12" fill="#8aa08c"/>
<rect x="19" y="30" width="3" height="16" fill="#2a3a30"/>
<ellipse cx="44" cy="35" rx="8" ry="6" fill="#6a8a66"/>
<path d="M14 50 Q26 41 50 38 L50 50z" fill="#d0ac30"/>
<path d="M20 50 Q30 46 50 47 L50 50z" fill="#8a8a3a"/>
</g></svg><div class="lbl" style="width:46px"><svg class="a" style="left:6px;top:3px" width="13" height="14" viewBox="0 0 13 14"><rect x="4" y="0" width="5.5" height="9" rx="2.75" fill="#fff"/><path d="M2 6.5a4.7 4.7 0 0 0 9.4 0" stroke="#fff" stroke-width="1.2" fill="none"/><rect x="6.1" y="11" width="1.2" height="2.2" fill="#fff"/><rect x="4" y="12.8" width="5.4" height="1.1" fill="#fff"/><path d="M1 13L12 2" stroke="#e8413c" stroke-width="1.5"/></svg><span class="a" style="left:20px;top:0">老秋</span></div></div><div class="a card" style="top:339px;border-color:#55575b"><svg class="a" style="left:54px;top:12px" width="50" height="50" viewBox="0 0 50 50"><defs><clipPath id="cp4"><circle cx="25" cy="25" r="25"/></clipPath><filter id="bl4"><feGaussianBlur stdDeviation="0.7"/></filter></defs><g clip-path="url(#cp4)" filter="url(#bl4)"><rect width="50" height="50" fill="#5a8ad0"/>
<rect y="0" width="50" height="15" fill="#6d98d8"/>
<path d="M25 0 L30 30 M30 10 L40 4" stroke="#7d8fb0" stroke-width="0.8"/>
<ellipse cx="8" cy="40" rx="9" ry="7" fill="#b78c9a"/>
<ellipse cx="19" cy="34" rx="4" ry="6" fill="#2f4a3a"/>
<ellipse cx="27" cy="38" rx="8" ry="8" fill="#b88898"/>
<ellipse cx="36" cy="35" rx="3" ry="4" fill="#2a3f38"/>
<ellipse cx="42" cy="42" rx="9" ry="8" fill="#d8d6dc"/>
<rect x="0" y="46" width="50" height="6" fill="#4f7a40"/>
</g></svg><div class="lbl" style="width:58px"><svg class="a" style="left:6px;top:3px" width="13" height="14" viewBox="0 0 13 14"><rect x="4" y="0" width="5.5" height="9" rx="2.75" fill="#fff"/><path d="M2 6.5a4.7 4.7 0 0 0 9.4 0" stroke="#fff" stroke-width="1.2" fill="none"/><rect x="6.1" y="11" width="1.2" height="2.2" fill="#fff"/><rect x="4" y="12.8" width="5.4" height="1.1" fill="#fff"/><path d="M1 13L12 2" stroke="#e8413c" stroke-width="1.5"/></svg><span class="a" style="left:20px;top:0">于振华</span></div></div><div class="a card" style="top:437px;border-color:#05cc62"><div class="a" style="left:54px;top:12px;width:50px;height:50px;border-radius:50%;background:#0a6cff;color:#fff;font-size:19px;line-height:50px;text-align:center">秦昳</div><div class="lbl" style="width:118px;height:22px;line-height:22px"><svg class="a" style="left:3px;top:4px" width="14" height="14" viewBox="0 0 14 14"><rect x="0.5" y="0.5" width="13" height="9.5" rx="1" fill="#fff"/><path d="M4 7.5c0-2.2 1.6-3.4 4-3.4V2.5l3 2.5-3 2.5V5.8c-1.7 0-3 .5-4 1.7z" fill="#222"/><rect x="3" y="11.5" width="8" height="1.5" fill="#fff"/></svg><svg class="a" style="left:22px;top:3px" width="12" height="15" viewBox="0 0 12 15"><rect x="3" y="0" width="6" height="10" rx="3" fill="#fff"/><rect x="3" y="6" width="6" height="4" fill="#1fc35b"/><path d="M1 7a5 5 0 0 0 10 0" stroke="#fff" stroke-width="1.3" fill="none"/><rect x="5.4" y="11.5" width="1.2" height="3" fill="#fff"/></svg><span class="a" style="left:36px;top:0">秦昳的屏幕共享</span></div></div><div class="a card" style="top:535px;border-color:#55575b"><div class="a" style="left:54px;top:12px;width:50px;height:50px;border-radius:50%;background:#0a6cff;color:#fff;font-size:19px;line-height:50px;text-align:center">昭昭</div></div><div class="a" style="left:837px;top:495px;width:72px;height:20px;background:rgba(45,45,48,.8)"><svg class="a" style="left:30px;top:4px" width="12" height="8" viewBox="0 0 12 8"><path d="M1 1l5 5 5-5" stroke="#ddd" stroke-width="1.6" fill="none"/></svg></div></div>
<div class="a" id="bot"></div>
<div class="a" style="left:0;top:591px;width:958px;height:50px">
 <svg class="a" style="left:24px;top:4px" width="20" height="25" viewBox="0 0 20 25"><rect x="6" y="0.5" width="8" height="14" rx="4" fill="#47494d"/><path d="M2.5 10.5a7.5 7.5 0 0 0 15 0" stroke="#47494d" stroke-width="1.8" fill="none"/><rect x="9.1" y="18" width="1.8" height="4.5" fill="#47494d"/><rect x="5" y="22.5" width="10" height="1.8" fill="#47494d"/><path d="M1.5 22L18 3" stroke="#fff" stroke-width="3.6"/><path d="M1.5 22L18 3" stroke="#f23a3a" stroke-width="1.8"/></svg>
 <span class="a t" style="left:12px;top:33px;font-size:11.5px;color:#333">解除静音</span>
 <svg class="a" style="left:64px;top:21px" width="10" height="6" viewBox="0 0 10 6"><path d="M1 5l4-4 4 4" stroke="#444" stroke-width="1.5" fill="none"/></svg>
 <svg class="a" style="left:95px;top:8px" width="25" height="17" viewBox="0 0 25 17"><rect x="0.5" y="1.5" width="16" height="14" rx="1.5" fill="#47494d"/><path d="M17 6.5l7-4.5v13l-7-4.5z" fill="#47494d"/><path d="M2 16.5L15 1" stroke="#fff" stroke-width="3.6"/><path d="M2 16.5L15 1" stroke="#f23a3a" stroke-width="1.8"/></svg>
 <span class="a t" style="left:85px;top:33px;font-size:11.5px;color:#333">开启视频</span>
 <svg class="a" style="left:137px;top:21px" width="10" height="6" viewBox="0 0 10 6"><path d="M1 5l4-4 4 4" stroke="#444" stroke-width="1.5" fill="none"/></svg>
 <svg class="a" style="left:202px;top:5px" width="25" height="22" viewBox="0 0 25 22"><rect x="1" y="1" width="23" height="16" fill="#47494d" stroke="#1ec85a" stroke-width="2"/><path d="M9 12c0-3 2-4.5 5-4.5V5.5l3.5 3.3-3.5 3.3V10c-2 0-3.6.6-5 2z" fill="#fff"/><rect x="7" y="20" width="11" height="1.8" fill="#47494d"/></svg>
 <span class="a t" style="left:191px;top:33px;font-size:11.5px;color:#333">共享屏幕</span>
 <svg class="a" style="left:243px;top:21px" width="10" height="6" viewBox="0 0 10 6"><path d="M1 5l4-4 4 4" stroke="#444" stroke-width="1.5" fill="none"/></svg>
 <svg class="a" style="left:276px;top:5px" width="19" height="23" viewBox="0 0 19 23"><path d="M9.5 0.5l8.5 3v8c0 5.5-4 9.3-8.5 11-4.5-1.7-8.5-5.5-8.5-11v-8z" fill="#47494d"/><path d="M5.5 12l4-3.8 4 3.8M5.5 15.5l4-3.8 4 3.8" stroke="#fff" stroke-width="1.5" fill="none"/></svg>
 <span class="a t" style="left:274px;top:33px;font-size:11.5px;color:#333">安全</span>
 <svg class="a" style="left:333px;top:5px" width="24" height="22" viewBox="0 0 24 22"><circle cx="9" cy="5" r="4.8" fill="#47494d"/><path d="M0.5 21c0-6 3.5-9.5 8.5-9.5 3 0 5 1 6.5 3a6 6 0 0 0 -1 7z" fill="#47494d"/><circle cx="18" cy="16" r="5.5" fill="#47494d" stroke="#fff" stroke-width="1.2"/><path d="M18 13v6M15 16h6" stroke="#fff" stroke-width="1.5"/></svg>
 <span class="a t" style="left:332px;top:33px;font-size:11.5px;color:#333">邀请</span>
 <svg class="a" style="left:403px;top:5px" width="22" height="22" viewBox="0 0 22 22"><circle cx="11" cy="5.5" r="5" fill="#47494d"/><path d="M1 21.5c0-6.5 4-10 10-10s10 3.5 10 10z" fill="#47494d"/><path d="M15.5 12.5c3 1 5.5 4 5.8 9" stroke="#fff" stroke-width="1" fill="none"/></svg>
 <span class="a t" style="left:381px;top:33px;font-size:11.5px;color:#333">管理成员(14)</span>
 <svg class="a" style="left:472px;top:9px" width="21" height="19" viewBox="0 0 21 19"><path d="M2 0.5h17a1.5 1.5 0 0 1 1.5 1.5v11a1.5 1.5 0 0 1-1.5 1.5H10l-4 4v-4H2A1.5 1.5 0 0 1 .5 13V2A1.5 1.5 0 0 1 2 .5z" fill="#47494d"/><circle cx="6" cy="7.5" r="1.4" fill="#fff"/><circle cx="10.5" cy="7.5" r="1.4" fill="#fff"/><circle cx="15" cy="7.5" r="1.4" fill="#fff"/></svg>
 <span class="a t" style="left:472px;top:33px;font-size:11.5px;color:#333">聊天</span>
 <svg class="a" style="left:531px;top:5px" width="22" height="22" viewBox="0 0 22 22"><circle cx="11" cy="11" r="9.8" fill="none" stroke="#47494d" stroke-width="1.8"/><circle cx="11" cy="11" r="7.3" fill="#47494d"/></svg>
 <span class="a t" style="left:530px;top:33px;font-size:11.5px;color:#333">录制</span>
 <svg class="a" style="left:571px;top:21px" width="10" height="6" viewBox="0 0 10 6"><path d="M1 5l4-4 4 4" stroke="#444" stroke-width="1.5" fill="none"/></svg>
 <svg class="a" style="left:605px;top:6px" width="23" height="20" viewBox="0 0 23 20"><rect x="6.5" y="0" width="10" height="8.5" rx="1.5" fill="#47494d"/><rect x="0.5" y="10.5" width="10" height="8.5" rx="1.5" fill="#47494d"/><rect x="12.5" y="10.5" width="10" height="8.5" rx="1.5" fill="#47494d"/></svg>
 <span class="a t" style="left:594px;top:33px;font-size:11.5px;color:#333">分组讨论</span>
 <svg class="a" style="left:669px;top:5px" width="22" height="22" viewBox="0 0 22 22"><rect x="0.5" y="0.5" width="9" height="9" rx="1.5" fill="#47494d"/><rect x="0.5" y="12" width="9" height="9" rx="1.5" fill="#47494d"/><rect x="12" y="12" width="9" height="9" rx="1.5" fill="#47494d"/><path d="M16.5 0.8l4.5 4.5-4.5 4.5-4.5-4.5z" fill="none" stroke="#47494d" stroke-width="1.4"/></svg>
 <span class="a t" style="left:668px;top:33px;font-size:11.5px;color:#333">应用</span>
 <svg class="a" style="left:729px;top:5px" width="22" height="22" viewBox="0 0 22 22"><path d="M9 0.5h4l.6 2.8 2.2 1 2.4-1.6 2.8 2.8-1.6 2.4 1 2.2 2.8.6v4l-2.8.6-1 2.2 1.6 2.4-2.8 2.8-2.4-1.6-2.2 1-.6 2.8H9l-.6-2.8-2.2-1-2.4 1.6-2.8-2.8 1.6-2.4-1-2.2L-.2 13V9l2.8-.6 1-2.2L2 3.8 4.8 1l2.4 1.6 2.2-1z" fill="#47494d"/><circle cx="11" cy="11" r="3.5" fill="#fff"/></svg>
 <span class="a t" style="left:728px;top:33px;font-size:11.5px;color:#333">设置</span>
 <div class="a" style="left:869px;top:6px;width:76px;height:36px;border:1px solid #f25a5a;border-radius:4px;color:#f04848;font-size:14px;line-height:34px;text-align:center">结束会议</div>
</div>

<div class="a" style="left:13px;top:485px;width:140px;height:29px;background:rgba(44,44,44,.7);border-radius:5px">
 <svg class="a" style="left:9px;top:6px" width="17" height="17" viewBox="0 0 17 17"><circle cx="8.5" cy="8.5" r="8.5" fill="#fff"/><circle cx="5.8" cy="6.5" r="1.2" fill="#666"/><circle cx="11.2" cy="6.5" r="1.2" fill="#666"/><path d="M4.2 9.5h8.6a4.3 4.3 0 0 1-8.6 0z" fill="#666"/></svg>
 <div class="a" style="left:32px;top:6px;width:1px;height:17px;background:#8a8a8a"></div>
 <span class="a t" style="left:44px;top:9px;font-size:12px;color:#d0d0d0">说点什么...</span>
 <div class="a" style="left:112px;top:6px;width:1px;height:17px;background:#8a8a8a"></div>
 <svg class="a" style="left:123px;top:9px" width="8" height="12" viewBox="0 0 8 12"><path d="M6.5 1L2 6l4.5 5" stroke="#eee" stroke-width="1.8" fill="none"/></svg>
</div>
<div class="a" style="left:765px;top:315px;width:16px;height:40px;background:rgba(60,60,60,.75);border-radius:5px 0 0 5px">
 <svg class="a" style="left:5px;top:14px" width="8" height="12" viewBox="0 0 8 12"><path d="M1.5 1L6 6l-4.5 5" stroke="#ccc" stroke-width="1.4" fill="none"/></svg>
</div>
<div class="a" style="left:784px;top:324px;width:1px;height:23px;background:#b0b2b5"></div>
<div class="a" style="left:787px;top:324px;width:1px;height:23px;background:#b0b2b5"></div>

<div class="a" style="left:397px;top:2px;width:164px;height:23px;background:#2e3034;border-radius:0 0 6px 6px;overflow:hidden">
 <div class="a" style="left:136px;top:0;width:28px;height:23px;background:#26282b"></div>
 <span class="a" style="left:8px;top:5px;color:#fff;font-size:13px;letter-spacing:-1px;line-height:15px;white-space:nowrap">您正在观看秦昳的屏幕</span>
 <svg class="a" style="left:145px;top:8px" width="12" height="10" viewBox="0 0 12 10"><rect x="0" y="0" width="10" height="1.3" fill="#fff"/><rect x="0" y="4" width="10" height="1.3" fill="#fff"/><rect x="0" y="8" width="6" height="1.3" fill="#fff"/><path d="M8 7.5h4l-2 2.5z" fill="#fff"/></svg>
</div>
<div class="a" style="left:699px;top:0;width:244px;height:29px;background:#2a2c30;border-radius:0 0 6px 6px;overflow:hidden">
 <svg class="a" style="left:11px;top:3px" width="14" height="16" viewBox="0 0 14 16"><rect x="4" y="0.5" width="6" height="10" rx="3" fill="#8a8d92"/><path d="M2 7.5a5 5 0 0 0 10 0" stroke="#8a8d92" stroke-width="1.1" fill="none"/><rect x="6.4" y="12.5" width="1.2" height="2" fill="#8a8d92"/><rect x="3.5" y="14.5" width="7" height="1" fill="#8a8d92"/><path d="M1 14.5L13 1.5" stroke="#f0463a" stroke-width="1.2"/></svg>
 <div class="a" style="left:36px;top:1px;width:1px;height:19px;background:#111"></div>
 <span class="a" style="left:45px;top:5px;color:#fff;font-size:13px;letter-spacing:-0.8px;line-height:15px;white-space:nowrap">正在讲话<span style="letter-spacing:0">: </span>秦昳;</span>
 <svg class="a" style="left:181px;top:0" width="60" height="28" viewBox="880 0 60 28"><defs><linearGradient id="lg1" x1="0" y1="1" x2="1" y2="0"><stop offset="0" stop-color="#505256"/><stop offset="1" stop-color="#36383c"/></linearGradient></defs><path d="M901 -1L887.5 13Q886 15 887.5 16.8L893.5 22.8L908.5 8z" fill="url(#lg1)"/><path d="M915 -1L929 13Q930.5 15 929 16.8L923.5 22.5L916 15L908.5 22.8L901.5 14.8z" fill="url(#lg1)"/></svg>
</div>
<svg class="a" style="left:942px;top:12px" width="6" height="9" viewBox="0 0 6 9"><path d="M0 0.5l5 7.5M5 0.5L0 8" stroke="#555" stroke-width="1.2"/></svg>

<div class="a" style="left:957px;top:1px;width:1px;height:640px;background:#e2e2e2"></div></body></html>
